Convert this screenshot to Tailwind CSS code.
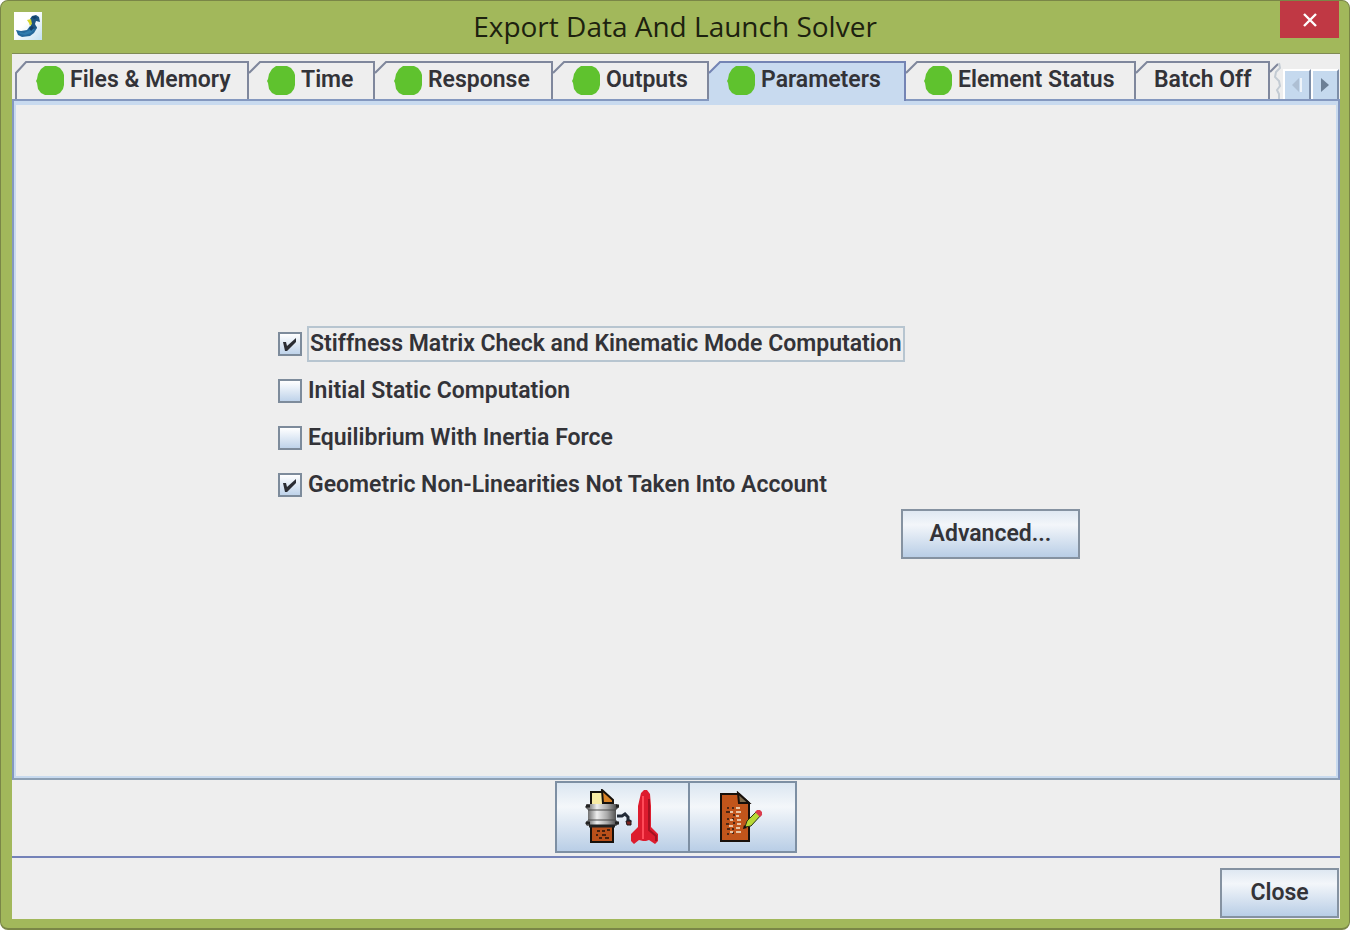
<!DOCTYPE html>
<html lang="en">
<head>
  <meta charset="UTF-8" />
  <meta name="viewport" content="width=device-width, initial-scale=1.0"/>
  <title>Export Data And Launch Solver</title>
  <script src="https://cdn.jsdelivr.net/npm/@tailwindcss/browser@4"></script>
</head>
<body class="bg-white">

  <!-- Shared shapes -->
  <svg class="hidden">
    <symbol id="dot" viewBox="0 0 30 30">
      <path d="M10 1h11l4 2 3 4 1 3v10l-1 4-3 4-4 2H10l-4-2-3-4-1-6-1-2 1-2 1-5 3-5z" fill="#5fc22e"/>
    </symbol>
    <symbol id="corner" viewBox="0 0 12 40">
      <path d="M0 12L11 1h1" fill="none" stroke="#7f879c" stroke-width="2"/>
    </symbol>
    <symbol id="tick" viewBox="0 0 24 24">
      <path d="M5 10h3l1 4 9-8v4l-9 9H7z" fill="#2b2d33"/>
    </symbol>
  </svg>

  <div class="min-h-screen flex flex-col bg-[#a2b85b] border border-b-2 border-[#7a8647] rounded-lg pl-[11px] pr-[9px] pb-[9px] font-[Roboto,'Liberation_Sans',sans-serif] text-[23px] leading-6 font-semibold text-[#333338]">

    <!-- Title bar -->
    <header class="h-[52px] flex items-start justify-between">
      <svg class="w-7 h-7 ml-[2px] mt-[11px]" viewBox="0 0 28 28">
        <defs><linearGradient id="sky" x2="1" y2="1"><stop offset=".4" stop-color="#fff"/><stop offset="1" stop-color="#c3e0f2"/></linearGradient></defs>
        <path d="M0 0h28v28H0z" fill="url(#sky)"/>
        <path d="M2 18l5 1 6-1 3-4 6 0 1 2-3 5-4 3-8 1-4-2z" fill="#24689b"/>
        <path d="M5 20l5 1 6-3 3-3 2 1-4 5-6 2-5-1z" fill="#2f7cae"/>
        <path d="M16 7l2-3 4-1 3 2 1 5-4-1-1 3 2 4-3 1-3-3-1-3z" fill="#1d5580"/>
        <path d="M18 5l3-1 2 2-3 1zM15 16l3-2 2 2-3 3z" fill="#123f69"/>
        <path d="M13 8l4-1 1 5-2 2-1-3z" fill="#d5d52b"/>
      </svg>
      <h1 class="font-[Open_Sans,'Noto_Sans',sans-serif] font-normal text-[28px] leading-[50px] text-[#1d220f] pl-7">Export Data And Launch Solver</h1>
      <button type="button" aria-label="Close window" class="mr-px w-[59px] h-[37px] bg-[#c03844] flex items-center justify-center">
        <svg class="w-[14px] h-[14px]" viewBox="0 0 14 14"><path d="M1 1l12 12M13 1L1 13" stroke="#fff" stroke-width="2.4"/></svg>
      </button>
    </header>

    <main class="flex-1 flex flex-col bg-[#eeeeee] border-t border-[#7f8a55]">

      <!-- Tabs -->
      <div class="flex justify-between pl-[3px] pt-[7px]">
        <div class="flex h-[38px]" role="tablist">
          <button type="button" role="tab" class="w-[234px] flex">
            <svg class="w-3 h-[38px] shrink-0" viewBox="0 0 12 38"><path d="M1 38V12L11 1h1" fill="none" stroke="#7f879c" stroke-width="2"/></svg>
            <span class="flex-1 h-full flex items-center gap-[5px] pl-2 pb-[3px] border-t-2 border-r-2 border-[#7f879c]"><svg class="w-[30px] h-[30px]"><use href="#dot"/></svg>Files &amp; Memory</span>
          </button>
          <button type="button" role="tab" class="w-[126px] flex">
            <svg class="w-3 h-10 shrink-0"><use href="#corner"/></svg>
            <span class="flex-1 h-full flex items-center gap-[5px] pl-[5px] pb-[3px] border-t-2 border-r-2 border-[#7f879c]"><svg class="w-[30px] h-[30px]"><use href="#dot"/></svg>Time</span>
          </button>
          <button type="button" role="tab" class="w-[178px] flex">
            <svg class="w-3 h-10 shrink-0"><use href="#corner"/></svg>
            <span class="flex-1 h-full flex items-center gap-[5px] pl-[6px] pb-[3px] border-t-2 border-r-2 border-[#7f879c]"><svg class="w-[30px] h-[30px]"><use href="#dot"/></svg>Response</span>
          </button>
          <button type="button" role="tab" class="w-[156px] flex">
            <svg class="w-3 h-10 shrink-0"><use href="#corner"/></svg>
            <span class="flex-1 h-full flex items-center gap-[5px] pl-[6px] pb-[3px] border-t-2 border-r-2 border-[#7f879c]"><svg class="w-[30px] h-[30px]"><use href="#dot"/></svg>Outputs</span>
          </button>
          <!-- Selected tab runs down over the panel's top line -->
          <button type="button" role="tab" aria-selected="true" class="w-[197px] h-10 relative flex">
            <svg class="w-3 h-10 shrink-0" viewBox="0 0 12 40"><path d="M0 40V12L11 1h1v39z" fill="#c8daef"/><path d="M0 12L11 1h1" fill="none" stroke="#7484b4" stroke-width="2"/></svg>
            <span class="flex-1 h-full flex items-center gap-[5px] pl-[5px] pb-[5px] bg-[#c8daef] border-t-2 border-r-2 border-[#7484b4]"><svg class="w-[30px] h-[30px]"><use href="#dot"/></svg>Parameters</span>
          </button>
          <button type="button" role="tab" class="w-[230px] flex">
            <svg class="w-3 h-10 shrink-0"><use href="#corner"/></svg>
            <span class="flex-1 h-full flex items-center gap-[5px] pl-[5px] pb-[3px] border-t-2 border-r-2 border-[#7f879c]"><svg class="w-[30px] h-[30px]"><use href="#dot"/></svg>Element Status</span>
          </button>
          <button type="button" role="tab" class="w-[134px] flex">
            <svg class="w-3 h-10 shrink-0"><use href="#corner"/></svg>
            <span class="flex-1 h-full flex items-center pl-[6px] pb-[3px] border-t-2 border-r-2 border-[#7f879c]">Batch Off</span>
          </button>
          <svg class="w-3 h-[38px]" viewBox="0 0 12 38" fill="none"><path d="M0 11L8 3" stroke="#7f879c" stroke-width="2"/><path d="M9 2l1 5-4 4-1 5 4 4 1 5-3 4 2 4v5" stroke="#c3cbd3" stroke-width="2"/></svg>
        </div>
        <div class="flex self-end h-[30px] pr-px">
          <button type="button" aria-label="Scroll tabs left" class="w-[28px] bg-[#c5d9ee] border-t-2 border-l-2 border-white border-r-2 border-r-[#7d8ea8] flex items-center justify-center">
            <svg class="w-3 h-4" viewBox="0 0 12 16"><path d="M8 1v14L1 8z" fill="#aebfd3"/><path d="M10 1v14" stroke="#eef4fa" stroke-width="2"/></svg>
          </button>
          <button type="button" aria-label="Scroll tabs right" class="w-[28px] bg-[#c5d9ee] border-t-2 border-l-2 border-white border-r-2 border-r-[#7d8ea8] flex items-center justify-center">
            <svg class="w-3 h-4" viewBox="0 0 12 16"><path d="M2 1v14l8-7z" fill="#6c7f95"/></svg>
          </button>
        </div>
      </div>

      <!-- Parameters panel -->
      <section class="flex-1 flex border-2 border-[#8498bf] border-b-[#8da0b4]" role="tabpanel">
        <div class="flex-1 flex flex-col items-center justify-center pl-[6px] pt-1 border-2 border-t-4 border-[#c8daef]">
          <div class="w-[802px] flex flex-col items-start gap-[11px]">
            <label class="h-9 flex items-center gap-[5px]">
              <span class="grid">
                <input type="checkbox" checked class="peer col-start-1 row-start-1 appearance-none w-6 h-6 border-2 border-[#7d8b9b] bg-linear-to-b from-white to-[#bfd3ea]">
                <svg class="col-start-1 row-start-1 w-6 h-6 pointer-events-none invisible peer-checked:visible"><use href="#tick"/></svg>
              </span>
              <span class="h-9 leading-8 px-[1px] border-2 border-[#b7c5d0]">Stiffness Matrix Check and Kinematic Mode Computation</span>
            </label>
            <label class="h-9 flex items-center gap-[6px]">
              <span class="grid">
                <input type="checkbox" class="peer col-start-1 row-start-1 appearance-none w-6 h-6 border-2 border-[#7d8b9b] bg-linear-to-b from-white to-[#bfd3ea]">
                <svg class="col-start-1 row-start-1 w-6 h-6 pointer-events-none invisible peer-checked:visible"><use href="#tick"/></svg>
              </span>
              Initial Static Computation
            </label>
            <label class="h-9 flex items-center gap-[6px]">
              <span class="grid">
                <input type="checkbox" class="peer col-start-1 row-start-1 appearance-none w-6 h-6 border-2 border-[#7d8b9b] bg-linear-to-b from-white to-[#bfd3ea]">
                <svg class="col-start-1 row-start-1 w-6 h-6 pointer-events-none invisible peer-checked:visible"><use href="#tick"/></svg>
              </span>
              Equilibrium With Inertia Force
            </label>
            <label class="h-9 flex items-center gap-[6px]">
              <span class="grid">
                <input type="checkbox" checked class="peer col-start-1 row-start-1 appearance-none w-6 h-6 border-2 border-[#7d8b9b] bg-linear-to-b from-white to-[#bfd3ea]">
                <svg class="col-start-1 row-start-1 w-6 h-6 pointer-events-none invisible peer-checked:visible"><use href="#tick"/></svg>
              </span>
              Geometric Non-Linearities Not Taken Into Account
            </label>
            <button type="button" class="-mt-[5px] self-end w-[179px] h-[50px] border-2 border-[#8592a1] bg-linear-to-b from-[#dfe8f2] via-[#f3f6fa] via-30% to-[#b9cee6]">Advanced...</button>
          </div>
        </div>
      </section>

      <!-- Solver actions -->
      <div class="flex justify-center pr-px pt-[1px] pb-[3px]">
        <button type="button" aria-label="Export and launch" class="w-[135px] h-[72px] pr-[3px] border-2 border-[#7d8fa3] bg-linear-to-b from-[#dbe6f1] via-[#f4f7fa] via-35% to-[#b9cee6] flex items-center justify-center">
          <svg class="w-[76px] h-[56px]" viewBox="0 0 76 56">
            <defs><linearGradient id="steel"><stop stop-color="#444"/><stop offset=".35" stop-color="#eee"/><stop offset=".65" stop-color="#aaa"/><stop offset="1" stop-color="#333"/></linearGradient></defs>
            <path d="M8 17V3h11l10 9v5z" fill="#f8eba4" stroke="#16110c" stroke-width="2"/>
            <path d="M19 1l11 10v3H20z" fill="#d98327" stroke="#16110c" stroke-width="2"/>
            <path d="M8 36h22v17H8z" fill="#b9501a" stroke="#16110c" stroke-width="2"/>
            <path d="M14 42h3m2 0h3m2-1h3M13 46h2m4 0h4M16 49h3m3 0h4" stroke="#47210f" stroke-width="2"/>
            <path d="M4 15h30l2 3-3 3v10l3 3-3 3H4l-2-3 3-3V21l-3-3z" fill="url(#steel)"/>
            <path d="M3 17h4m26 0h3M3 34h4m25 0h4M6 37h26" stroke="#222" stroke-width="3"/>
            <path d="M5 21h28M5 31h28" stroke="#4b4b4b" stroke-width="1"/>
            <path d="M34 27h5l3-2 3 3v3l3 2" fill="none" stroke="#222b38" stroke-width="3"/>
            <path d="M43 32h5v4h-4z" fill="#7d2420" stroke="#1e1718" stroke-width="1"/>
            <path d="M58 4l3-3h3l3 4 1 12v21l7 7v7l-3 3-6-4-3 1h-3l-4-1-5 4-3-3v-7l7-7V17z" fill="#dd1c2e"/>
            <path d="M60 7v43" stroke="#ff4a58" stroke-width="2"/>
            <path d="M66 10v31l7 6v5" fill="none" stroke="#a31221" stroke-width="2"/>
          </svg>
        </button>
        <button type="button" aria-label="Edit data file" class="w-[107px] h-[72px] pr-[2px] border-2 border-l-0 border-[#7d8fa3] bg-linear-to-b from-[#dbe6f1] via-[#f4f7fa] via-35% to-[#b9cee6] flex items-center justify-center">
          <svg class="w-[44px] h-[52px]" viewBox="0 0 44 52">
            <path d="M2 3h18l10 9v38H2z" fill="#c1551b" stroke="#17100b" stroke-width="2"/>
            <path d="M19 2l11 10H20z" fill="#7d6a4c" stroke="#17100b" stroke-width="2"/>
            <path d="M8 17h2m3 0h2M7 21h4m3 3h2M8 28h2m3 0h2M7 33h3m4-1h2M8 38h3m2 0h2M8 43h2m3-1h2" stroke="#4e2715" stroke-width="2"/>
            <path d="M17 17h4M11 21h3m3 0h5M17 25h3M11 29h3m4 0h4M10 35h4m4-2h4M17 37h4M11 41h3m3 0h5" stroke="#e6c5a5" stroke-width="2"/>
            <path d="M26 36l2-6 11-11 4 4-11 12z" fill="#b8d936" stroke="#2b3216" stroke-width="1"/>
            <path d="M36 21l2-2h3l2 2v3l-2 2z" fill="#db3c4d"/>
            <path d="M25 34l-1 4 4-1z" fill="#111"/>
          </svg>
        </button>
      </div>

      <!-- Footer -->
      <footer class="flex justify-end pt-[10px] pr-px pb-[1px] border-t-2 border-[#7482b8]">
        <button type="button" class="w-[119px] h-[50px] border-2 border-[#8592a1] bg-linear-to-b from-[#dfe8f2] via-[#f3f6fa] via-30% to-[#b9cee6]">Close</button>
      </footer>
    </main>
  </div>

</body>
</html>
